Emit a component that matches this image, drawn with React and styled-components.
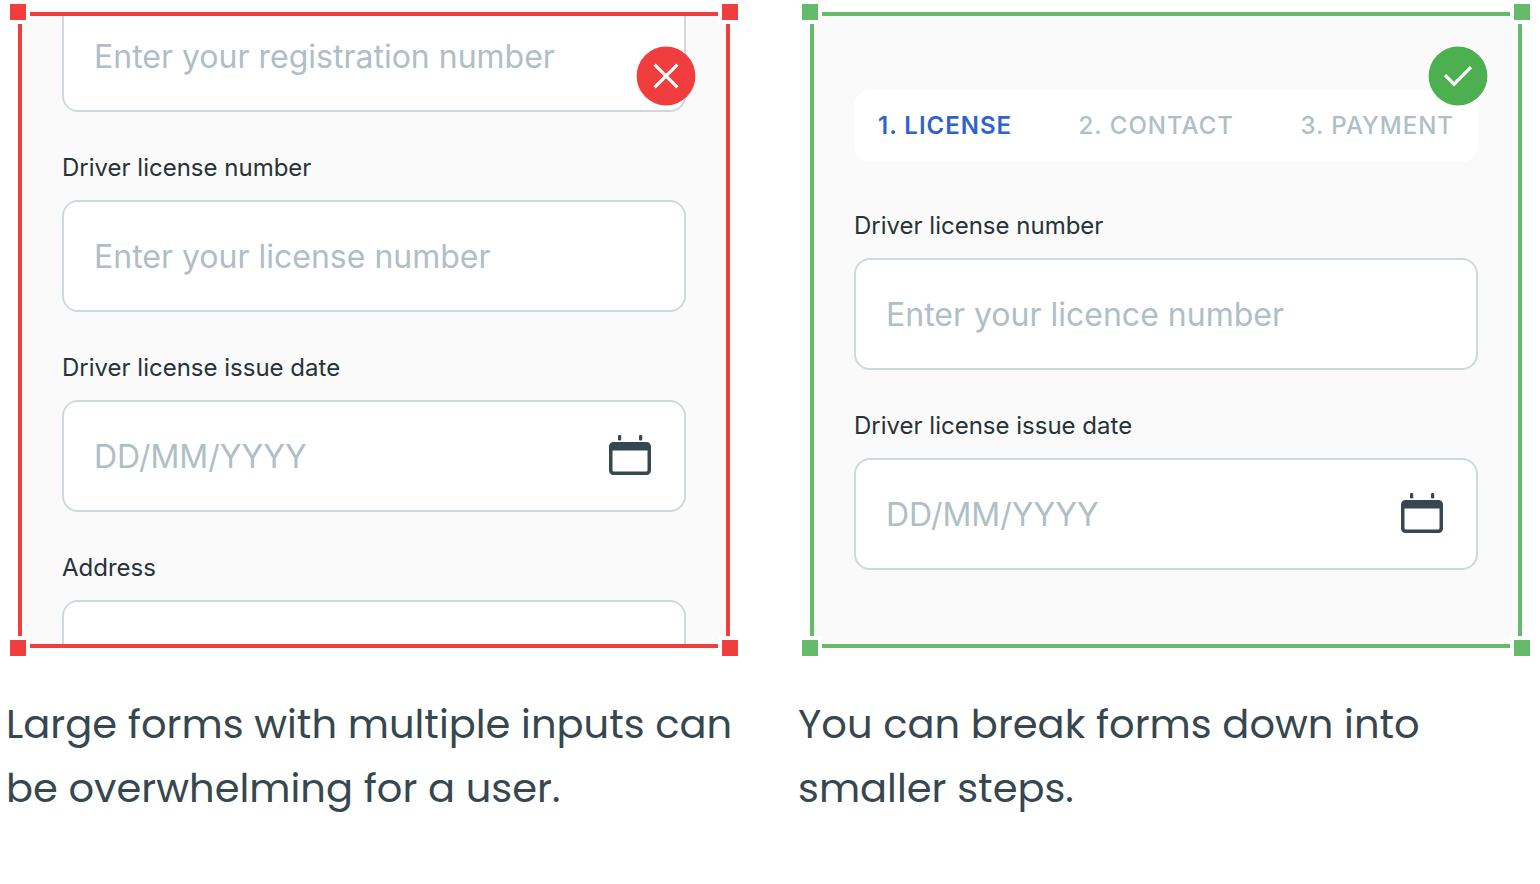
import React from 'react';
import styled, { createGlobalStyle } from 'styled-components';

const GlobalStyle = createGlobalStyle`
  * {
    box-sizing: border-box;
  }

  body {
    margin: 0;
    background: #fff;
    font-family: Inter, "Liberation Sans", sans-serif;
  }
`;

const Comparison = styled.main`
  display: grid;
  grid-template-columns: 1fr 1fr;
  gap: 56px;
  padding: 12px 6px 64px;
`;

const Example = styled.figure`
  margin: 0;
  min-width: 0;
`;

const Frame = styled.div`
  position: relative;
  margin: 0 12px;
  border: 4px solid ${({ $color }) => $color};
`;

const Handle = styled.span`
  position: absolute;
  width: 24px;
  height: 24px;
  border: 4px solid #fff;
  background: ${({ $color }) => $color};
  ${({ $y }) => $y}: -16px;
  ${({ $x }) => $x}: -16px;
`;

const Badge = styled.svg`
  position: absolute;
  top: 30px;
  right: 30px;
  width: 60px;
  height: 60px;
`;

const Screen = styled.form`
  display: flex;
  flex-direction: column;
  gap: 40px;
  height: 628px;
  padding: ${({ $steps }) => ($steps ? '74px 40px' : '0 40px')};
  overflow: hidden;
  background: #fafafa;
`;

const FieldGroup = styled.div`
  display: flex;
  flex-direction: column;
  flex-shrink: 0;
  gap: 16px;

  /* the first field is already partly scrolled past */
  ${({ $scrolled }) => $scrolled && 'margin-top: -16px;'}
`;

const Label = styled.label`
  color: #263238;
  font-size: 24px;
  line-height: 32px;
`;

const InputBox = styled.div`
  display: flex;
  align-items: center;
  height: 112px;
  padding: 0 30px;
  border: 2px solid #cfd8dc;
  border-radius: 16px;
  background: #fff;
`;

const Input = styled.input`
  flex: 1;
  min-width: 0;
  padding: 2px 0 0;
  border: none;
  outline: none;
  background: none;
  color: #263238;
  font-family: inherit;
  font-size: 32px;
  line-height: 48px;

  &::placeholder {
    color: #b0bec5;
    opacity: 1;
  }
`;

const IconButton = styled.button`
  display: flex;
  padding: 0;
  border: none;
  background: none;
  color: #37474f;
  cursor: pointer;
`;

const Steps = styled.nav`
  display: flex;
  justify-content: space-between;
  align-items: center;
  height: 72px;
  margin-bottom: 8px;
  padding: 0 24px;
  border-radius: 16px;
  background: #fff;
`;

const Step = styled.a`
  color: ${({ $active }) => ($active ? '#2f62cc' : '#b0bec5')};
  font-size: 24px;
  font-weight: ${({ $active }) => ($active ? 600 : 500)};
  line-height: 32px;
  letter-spacing: 1px;
  text-decoration: none;
  white-space: nowrap;
`;

const Caption = styled.figcaption`
  margin-top: 44px;
  color: #37474f;
  font-family: Poppins, Inter, sans-serif;
  font-size: 40px;
  line-height: 64px;
`;

const CalendarIcon = () => (
  <svg width="48" height="48" viewBox="0 0 48 48" fill="currentColor" aria-hidden="true">
    <rect x="12" y="3" width="3.2" height="5.4" rx="1.2" />
    <rect x="33" y="3" width="3.2" height="5.4" rx="1.2" />
    <path
      fillRule="evenodd"
      d="M7.5 10h33a4.5 4.5 0 0 1 4.5 4.5v24a4.5 4.5 0 0 1-4.5 4.5h-33A4.5 4.5 0 0 1 3 38.5v-24A4.5 4.5 0 0 1 7.5 10zM6.5 18.5V38a1.5 1.5 0 0 0 1.5 1.5h32a1.5 1.5 0 0 0 1.5-1.5V18.5z"
    />
  </svg>
);

const Field = ({ id, label, placeholder, date, scrolled }) => (
  <FieldGroup $scrolled={scrolled}>
    {label && <Label htmlFor={id}>{label}</Label>}
    <InputBox>
      <Input
        id={id}
        type="text"
        placeholder={placeholder}
        aria-label={label ? undefined : placeholder}
      />
      {date && (
        <IconButton type="button" aria-label="Choose a date">
          <CalendarIcon />
        </IconButton>
      )}
    </InputBox>
  </FieldGroup>
);

const Handles = ({ color }) => (
  <>
    <Handle $color={color} $y="top" $x="left" />
    <Handle $color={color} $y="top" $x="right" />
    <Handle $color={color} $y="bottom" $x="left" />
    <Handle $color={color} $y="bottom" $x="right" />
  </>
);

const RED = '#f03d3e';
const GREEN = '#66bb6a';

const App = () => {
  return (
    <>
      <GlobalStyle />
      <Comparison>
        <Example>
          <Frame $color={RED}>
            <Screen>
              <Field id="registration" placeholder="Enter your registration number" scrolled />
              <Field
                id="license"
                label="Driver license number"
                placeholder="Enter your license number"
              />
              <Field
                id="issued"
                label="Driver license issue date"
                placeholder="DD/MM/YYYY"
                date
              />
              <Field id="address" label="Address" />
            </Screen>
            <Handles color={RED} />
            <Badge viewBox="0 0 60 60" role="img" aria-label="Avoid">
              <circle cx="30" cy="30" r="29.4" fill={RED} />
              <path d="M18.6 18.6L41.4 41.4M41.4 18.6L18.6 41.4" stroke="#fff" strokeWidth="3.2" />
            </Badge>
          </Frame>
          <Caption>Large forms with multiple inputs can be overwhelming for a user.</Caption>
        </Example>

        <Example>
          <Frame $color={GREEN}>
            <Screen $steps>
              <Steps>
                <Step href="#step-license" $active>1. LICENSE</Step>
                <Step href="#contact">2. CONTACT</Step>
                <Step href="#payment">3. PAYMENT</Step>
              </Steps>
              <Field
                id="step-license"
                label="Driver license number"
                placeholder="Enter your licence number"
              />
              <Field
                id="step-issued"
                label="Driver license issue date"
                placeholder="DD/MM/YYYY"
                date
              />
            </Screen>
            <Handles color={GREEN} />
            <Badge viewBox="0 0 60 60" role="img" aria-label="Recommended">
              <circle cx="30" cy="30" r="29.4" fill="#4caf50" />
              <path d="M17 29.2L26 38.2L43 21.2" fill="none" stroke="#fff" strokeWidth="3.2" />
            </Badge>
          </Frame>
          <Caption>You can break forms down into smaller steps.</Caption>
        </Example>
      </Comparison>
    </>
  );
};

export default App;
